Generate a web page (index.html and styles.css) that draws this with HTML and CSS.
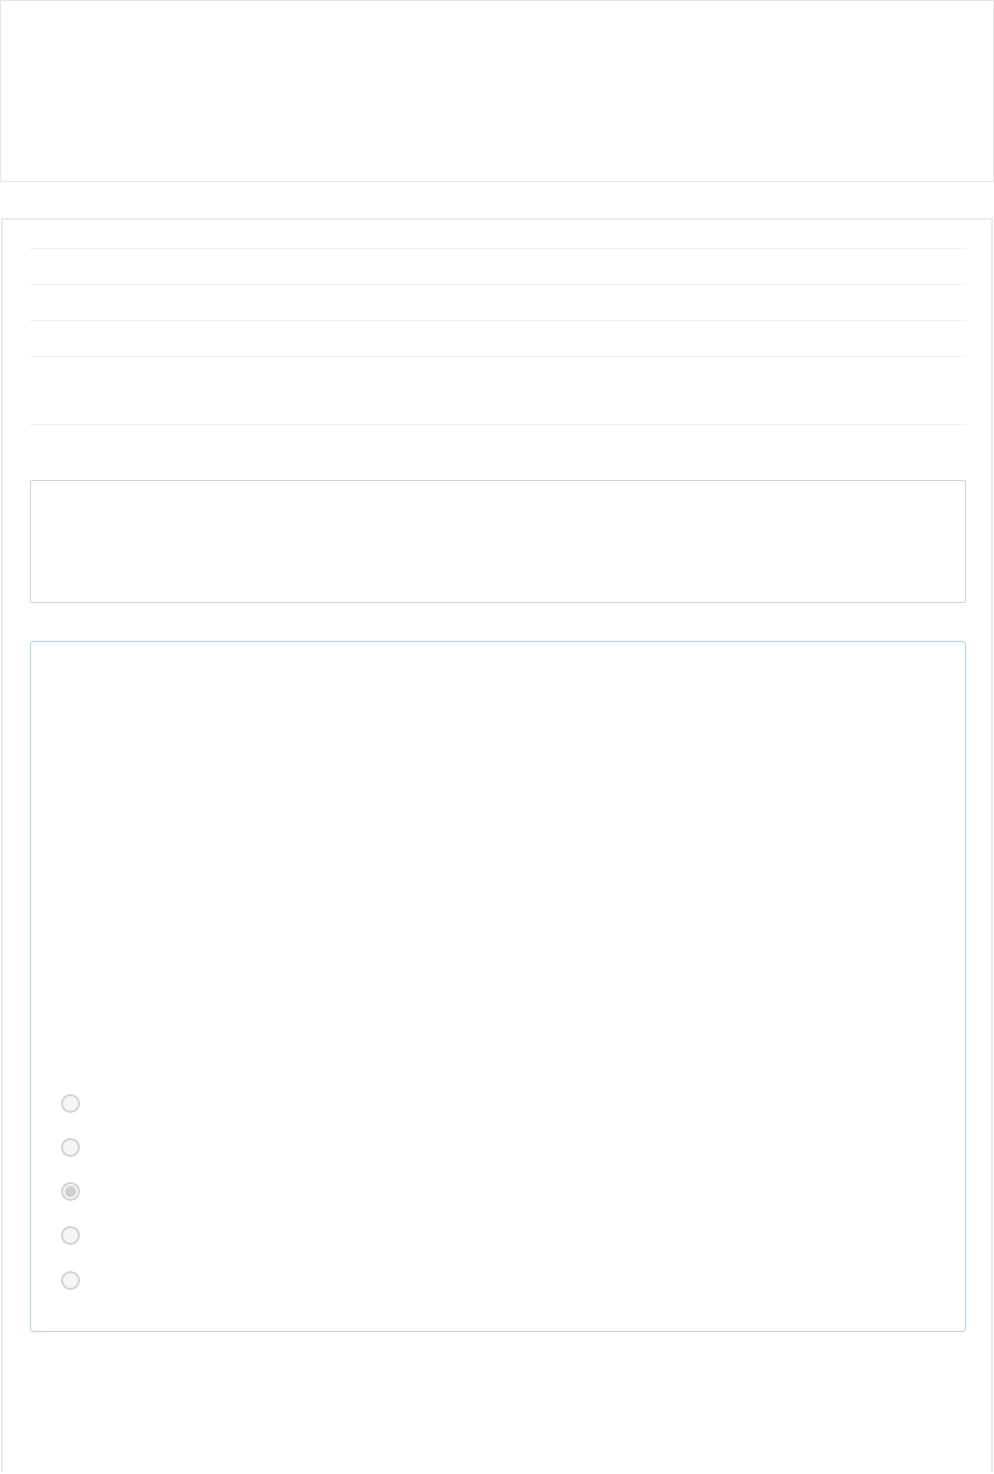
FILE: index.html
```html
<!DOCTYPE html>
<html lang="en">
<head>
  <meta charset="UTF-8">
  <meta name="viewport" content="width=device-width, initial-scale=1.0">
  <title>Quiz</title>
  <link rel="stylesheet" href="styles.css">
</head>
<body>
  <!-- Header -->
  <div class="header"></div>

  <!-- Main panel -->
  <div class="panel">
    <ul class="info-list">
      <li class="info-row"></li>
      <li class="info-row"></li>
      <li class="info-row"></li>
      <li class="info-row tall"></li>
    </ul>

    <div class="notice"></div>

    <!-- Question card -->
    <div class="question">
      <div class="question-body"></div>
      <div class="options">
        <label class="option"><span class="radio"></span></label>
        <label class="option"><span class="radio"></span></label>
        <label class="option"><span class="radio checked"></span></label>
        <label class="option"><span class="radio"></span></label>
        <label class="option"><span class="radio"></span></label>
      </div>
    </div>
  </div>
</body>
</html>
```

FILE: styles.css
```css
* {
  box-sizing: border-box;
}
body {
  font-family: "Open Sans", Arial, sans-serif;
  margin: 0;
  background: #fff;
  color: #333;
}
.header {
  height: 182px;
  border: 1px solid #e6e6e6;
  margin-bottom: 36px;
}
.panel {
  margin: 0 1px;
  border: 2px solid #ebebeb;
  border-bottom: none;
  padding: 28px 25px 140px 27px;
}
.info-list {
  list-style: none;
  margin: 0;
  padding: 0;
  border-bottom: 1px solid #f0f0f0;
}
.info-row {
  height: 36px;
  border-top: 1px solid #f0f0f0;
}
.info-row.tall {
  height: 68px;
}
.notice {
  margin-top: 55px;
  height: 123px;
  border: 1px solid #d2d2d2;
  border-radius: 2px;
  box-shadow: 0 0 1px rgba(0, 0, 0, 0.1);
}
.question {
  margin-top: 38px;
  height: 691px;
  border: 1px solid #acd8f0;
  border-radius: 4px;
  box-shadow: 0 0 1px rgba(90, 170, 220, 0.5);
  padding: 0 30px;
}
.question-body {
  height: 439px;
}
.options {
  display: flex;
  flex-direction: column;
}
.option {
  display: flex;
  align-items: center;
  height: 44.25px;
}
.radio {
  width: 19px;
  height: 19px;
  border: 2px solid #d2d2d2;
  border-radius: 50%;
  background: #f5f5f5;
  position: relative;
}
.radio.checked::after {
  content: "";
  position: absolute;
  left: 2px;
  top: 2px;
  width: 11px;
  height: 11px;
  border-radius: 50%;
  background: #cfcfcf;
}
```
